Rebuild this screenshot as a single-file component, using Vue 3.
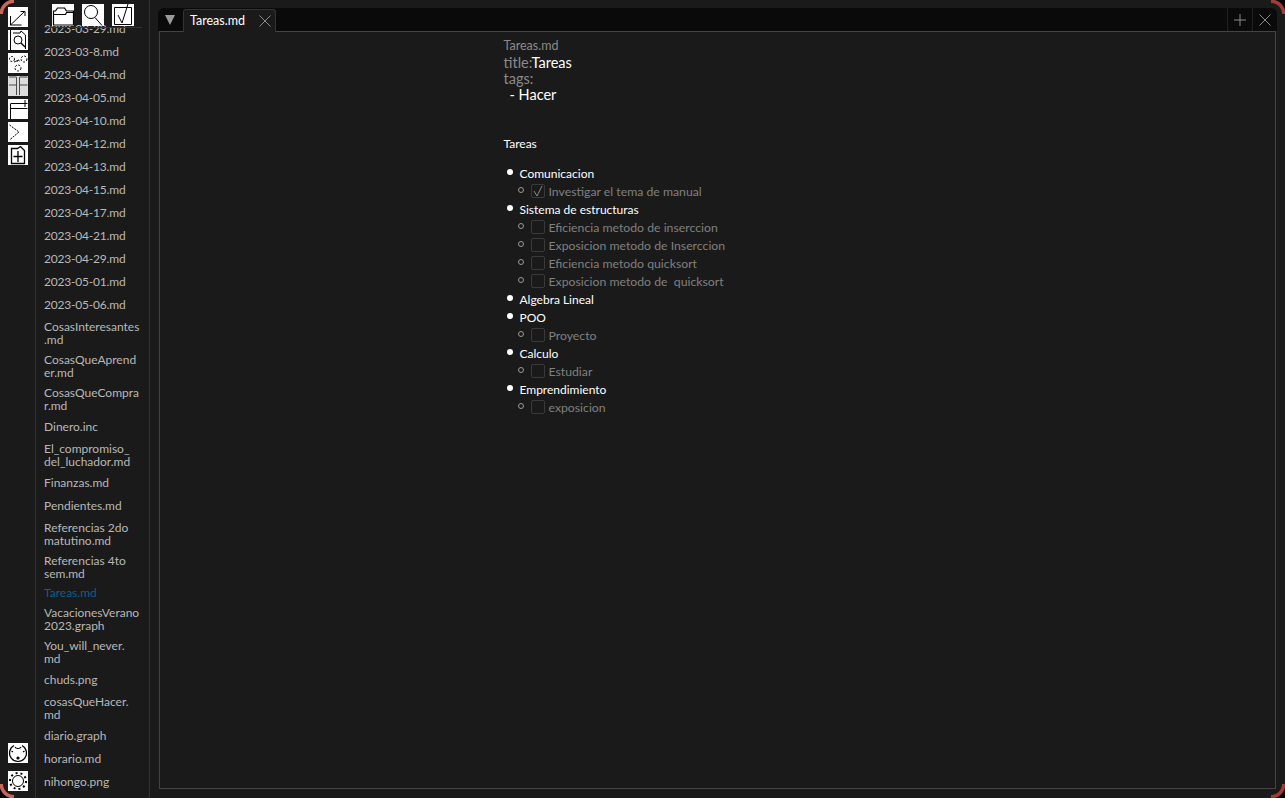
<template>
  <div class="window">
    <div class="rail">
      <div class="rail__group">
        <svg class="rail__icon" viewBox="0 0 20 20" width="20" height="20">
          <rect width="20" height="20" fill="#fff" />
          <path d="M2.500 9v9h11M2.500 18L17 4M12.500 4.500h4.500V9" fill="none" stroke="#000" />
        </svg>
        <svg class="rail__icon" viewBox="0 0 20 20" width="20" height="20">
          <rect width="20" height="20" fill="#fff" />
          <path d="M2.500 0v20M5 3h7l1-2 4.500 4v14" fill="none" stroke="#000" />
          <circle cx="10" cy="10" r="4" fill="none" stroke="#000" />
          <path d="M13 13l4 4" fill="none" stroke="#000" stroke-width="1.500" />
        </svg>
        <svg class="rail__icon" viewBox="0 0 20 20" width="20" height="20">
          <rect width="20" height="20" fill="#fff" />
          <g fill="none" stroke="#000" stroke-dasharray="2 1.500">
            <circle cx="4" cy="6" r="2.500" />
            <circle cx="16" cy="6" r="3" />
            <circle cx="10" cy="15" r="3" />
            <path d="M6 9l5-2M8 8h4" />
          </g>
        </svg>
        <svg class="rail__icon rail__icon--soft" viewBox="0 0 20 20" width="20" height="20">
          <rect width="20" height="20" fill="#fff" />
          <path d="M1 9h7.500M8.500 1v18M11.500 1v18M11.500 1h8M11.500 9h8M1 1h7.500" fill="none" stroke="#555" />
        </svg>
        <svg class="rail__icon" viewBox="0 0 20 20" width="20" height="20">
          <rect width="20" height="20" fill="#fff" />
          <path d="M2.500 5v15M2.500 4.500h17M2.500 9.500h17M17 1v7" fill="none" stroke="#000" />
        </svg>
        <svg class="rail__icon" viewBox="0 0 20 20" width="20" height="20">
          <rect width="20" height="20" fill="#fff" />
          <path d="M1.500 3l9.500 7-9.500 8" fill="none" stroke="#000" stroke-dasharray="2 1" />
        </svg>
        <svg class="rail__icon" viewBox="0 0 20 20" width="20" height="20">
          <rect width="20" height="20" fill="#fff" />
          <path d="M3.500 3.500h6l3-2 4 4v13h-13zM10 6v11M5.500 11.500h9" fill="none" stroke="#000" stroke-width="1.300" />
        </svg>
      </div>
      <div class="rail__group rail__group--bottom">
        <svg class="rail__icon" viewBox="0 0 20 20" width="20" height="20">
          <rect width="20" height="20" fill="#fff" />
          <g fill="none" stroke="#000" stroke-width="1.200">
            <path d="M6 2.500A8.500 8.500 0 1 0 14 2.500" />
            <path d="M7 4c1 2 5 2 6 0M3.500 8l1.500 1M16.500 8l-1.500 1" />
            <circle cx="10" cy="15" r="1" fill="#000" />
          </g>
        </svg>
        <svg class="rail__icon" viewBox="0 0 20 20" width="20" height="20">
          <rect width="20" height="20" fill="#fff" />
          <g fill="none" stroke="#000">
            <circle cx="10" cy="10" r="5.500" />
            <circle cx="10" cy="10" r="8" stroke-width="2" stroke-dasharray="2 3" />
          </g>
        </svg>
      </div>
    </div>

    <div class="files">
      <div class="files__head">
        <svg class="files__btn" viewBox="0 0 22 22" width="22" height="22">
          <rect width="22" height="22" fill="#fff" />
          <path d="M1.500 21V7h2l2-3h7l2 3h7v14zM1.500 10.500h12l1-2h7" fill="none" stroke="#000" stroke-width="1.200" />
        </svg>
        <svg class="files__btn" viewBox="0 0 22 22" width="22" height="22">
          <rect width="22" height="22" fill="#fff" />
          <circle cx="9" cy="8" r="6.500" fill="none" stroke="#000" />
          <path d="M13 13.500l7 8" fill="none" stroke="#000" />
        </svg>
        <svg class="files__btn" viewBox="0 0 22 22" width="22" height="22">
          <rect width="22" height="22" fill="#fff" />
          <path d="M2.500 3.500h17v17h-17zM6 11l4 8 6-19" fill="none" stroke="#000" />
        </svg>
      </div>
      <div class="files__list">
        <div
          v-for="f in files"
          :key="f"
          class="files__item"
          :class="{ 'files__item--on': f === 'Tareas.md', 'files__item--date': f.startsWith('2023') }"
        ><span>{{ f }}</span></div>
      </div>
    </div>

    <div class="main">
      <div class="tabs">
        <div class="tabs__menu"><span class="tabs__arrow"></span></div>
        <div class="tab">
          <span>Tareas.md</span>
          <svg viewBox="0 0 12 12" width="12" height="12"><path d="M0.500 0.500l11 11M11.500 0.500l-11 11" stroke="#8a8a8a" fill="none" /></svg>
        </div>
        <div class="tabs__fill"></div>
        <div class="tabs__act">
          <svg viewBox="0 0 12 12" width="12" height="12"><path d="M6 0v12M0 6h12" stroke="#8a8a8a" fill="none" /></svg>
        </div>
        <div class="tabs__act">
          <svg viewBox="0 0 12 12" width="12" height="12"><path d="M0.500 0.500l11 11M11.500 0.500l-11 11" stroke="#8a8a8a" fill="none" /></svg>
        </div>
      </div>
      <div class="pane">
        <div class="doc">
          <div class="doc__name">Tareas.md</div>
          <div class="meta"><span class="dim">title:</span>Tareas</div>
          <div class="meta"><span class="dim">tags:</span></div>
          <div class="meta meta--tag">- Hacer</div>
          <div class="doc__title">Tareas</div>
          <ul class="tree">
            <li v-for="g in tasks" :key="g.name">
              <div class="tree__row"><i class="dot"></i>{{ g.name }}</div>
              <div v-for="t in g.items" :key="t.text" class="tree__sub">
                <i class="ring"></i>
                <span class="check">
                  <svg v-if="t.done" viewBox="0 0 14 14" width="14" height="14"><path d="M3 7l3 5 5-10" stroke="#8a8a8a" fill="none" /></svg>
                </span>
                <span class="tree__txt">{{ t.text }}</span>
              </div>
            </li>
          </ul>
        </div>
      </div>
    </div>
    <i class="corner corner--tl"></i>
    <i class="corner corner--tr"></i>
    <i class="corner corner--bl"></i>
    <i class="corner corner--br"></i>
  </div>
</template>

<script setup>
const files = [
  '2023-03-29.md', '2023-03-8.md', '2023-04-04.md', '2023-04-05.md', '2023-04-10.md', '2023-04-12.md',
  '2023-04-13.md', '2023-04-15.md', '2023-04-17.md', '2023-04-21.md', '2023-04-29.md', '2023-05-01.md',
  '2023-05-06.md', 'CosasInteresantes\n.md', 'CosasQueAprend\ner.md', 'CosasQueCompra\nr.md', 'Dinero.inc',
  'El_compromiso_\ndel_luchador.md', 'Finanzas.md', 'Pendientes.md', 'Referencias 2do\nmatutino.md',
  'Referencias 4to\nsem.md', 'Tareas.md', 'VacacionesVerano\n2023.graph', 'You_will_never.\nmd', 'chuds.png',
  'cosasQueHacer.\nmd', 'diario.graph', 'horario.md', 'nihongo.png',
]
const tasks = [
  { name: 'Comunicacion', items: [{ text: 'Investigar el tema de manual', done: true }] },
  {
    name: 'Sistema de estructuras',
    items: [
      { text: 'Eficiencia metodo de inserccion' },
      { text: 'Exposicion metodo de Inserccion' },
      { text: 'Eficiencia metodo quicksort' },
      { text: 'Exposicion metodo de  quicksort' },
    ],
  },
  { name: 'Algebra Lineal', items: [] },
  { name: 'POO', items: [{ text: 'Proyecto' }] },
  { name: 'Calculo', items: [{ text: 'Estudiar' }] },
  { name: 'Emprendimiento', items: [{ text: 'exposicion' }] },
]
</script>

<style>
html, body { margin: 0; background: #1a1a1a; overflow: hidden; }
</style>

<style scoped>
.window {
  position: relative;
  width: 1285px;
  height: 798px;
  display: flex;
  overflow: hidden;
  background: #1a1a1a;
  font-family: Lato, "Noto Sans", sans-serif;
  font-size: 12px;
  color: #fff;
}
.corner { position: absolute; width: 14px; height: 14px; }
.corner--tl { left: 0; top: 0; background: radial-gradient(circle at 100% 100%, transparent 10.5px, #c9665c 11.5px, #c9665c 14px, #000 15px); }
.corner--tr { right: 0; top: 0; background: radial-gradient(circle at 0 100%, transparent 10.5px, #a53a30 11.5px, #a53a30 14px, #000 15px); }
.corner--bl { left: 0; bottom: 0; background: radial-gradient(circle at 100% 0, transparent 10.5px, #c9665c 11.5px, #c9665c 14px, #000 15px); }
.corner--br { right: 0; bottom: 0; background: radial-gradient(circle at 0 0, transparent 10.5px, #a53a30 11.5px, #a53a30 14px, #000 15px); }
.rail {
  width: 36px;
  flex: none;
  border-right: 1px solid #333;
  padding: 7px 0 7px 8px;
  box-sizing: border-box;
  display: flex;
  flex-direction: column;
  justify-content: space-between;
}
.rail__group { display: flex; flex-direction: column; gap: 3px; }
.rail__group--bottom { gap: 8px; }
.rail__icon { display: block; }
.rail__icon--soft { opacity: 0.85; }
.files {
  width: 114px;
  flex: none;
  border-right: 1px solid #333;
  box-sizing: border-box;
  display: flex;
  flex-direction: column;
  overflow: hidden;
}
.files__head {
  height: 28px;
  flex: none;
  display: flex;
  gap: 8px;
  padding: 4px 0 0 8px;
  box-sizing: border-box;
  border-bottom: 1px solid #333;
  margin: 0 7px 0 8px;
  position: relative;
  z-index: 1;
}
.files__btn { display: block; }
.files__list { margin-top: -11px; padding-left: 8px; }
.files__item {
  min-height: 23px;
  padding: 3.5px 0;
  box-sizing: border-box;
  display: flex;
  align-items: center;
  white-space: pre-line;
  color: #b8b8b8;
  line-height: 13px;
}
.files__item--date { letter-spacing: -0.2px; }
.files__item--on { color: #0f5f86; min-height: 19px; padding: 3px 0; }
.main {
  flex: 1;
  min-width: 0;
  padding: 8px 8px 9px 8px;
  display: flex;
  flex-direction: column;
}
.tabs {
  height: 23px;
  flex: none;
  display: flex;
  background: #0a0a0a;
  border-radius: 6px 6px 0 0;
  position: relative;
  z-index: 1;
}
.tabs__menu { width: 24px; display: flex; align-items: center; justify-content: center; }
.tabs__arrow { width: 0; height: 0; border-left: 5px solid transparent; border-right: 5px solid transparent; border-top: 10px solid #999; }
.tab {
  width: 93px;
  height: 23px;
  margin: 1px 0 0 1px;
  box-sizing: border-box;
  background: #1a1a1a;
  border: 1px solid #333;
  border-bottom: none;
  border-radius: 3px 3px 0 0;
  display: flex;
  align-items: center;
  justify-content: space-between;
  padding: 0 4px 1px 6px;
  font-size: 12.5px;
}
.tabs__fill { flex: 1; }
.tabs__act { width: 24px; display: flex; align-items: center; justify-content: center; border-left: 1px solid #222; }
.pane {
  flex: 1;
  border: 1px solid #444;
  margin: 0 1px;
}
.doc { width: 428px; margin: 0 auto; padding-top: 6px; }
.doc__name { color: #8a8a8a; line-height: 16px; margin-bottom: 1px; font-size: 12.5px; }
.meta { font-size: 14.5px; line-height: 16px; }
.meta--tag { padding-left: 6px; }
.dim { color: #8a8a8a; }
.doc__title { margin-top: 33px; line-height: 16px; }
.tree { list-style: none; margin: 12px 0 0; padding: 0; }
.tree__row { display: flex; align-items: center; height: 18px; padding-left: 16px; position: relative; }
.dot { position: absolute; left: 3px; top: 5px; width: 6px; height: 6px; background: #fff; border-radius: 50%; }
.tree__sub { display: flex; align-items: center; height: 18px; padding-left: 27px; position: relative; color: #808080; font-size: 12.25px; }
.ring { position: absolute; left: 14px; top: 5px; width: 6px; height: 6px; border: 1px solid #999; border-radius: 50%; box-sizing: border-box; }
.check { width: 14px; height: 14px; border: 1px solid #3a3a3a; border-radius: 2px; box-sizing: border-box; margin-right: 4px; display: flex; }
.check svg { margin: -1px; }
.tree__txt { white-space: pre; }
</style>
